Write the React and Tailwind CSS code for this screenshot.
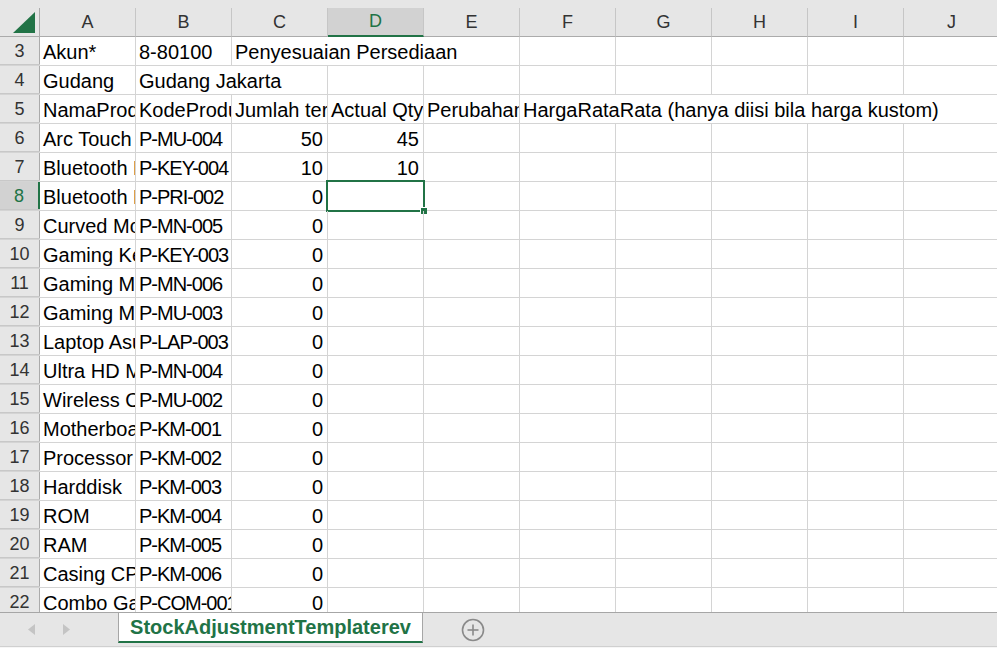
import React from "react";

const COLS = ["A", "B", "C", "D", "E", "F", "G", "H", "I", "J"];

const products = [
  [6, "Arc Touch Mouse", "P-MU-004", "50", "45"],
  [7, "Bluetooth Keyboard", "P-KEY-004", "10", "10"],
  [8, "Bluetooth Printer", "P-PRI-002", "0", ""],
  [9, "Curved Monitor", "P-MN-005", "0", ""],
  [10, "Gaming Keyboard", "P-KEY-003", "0", ""],
  [11, "Gaming Monitor", "P-MN-006", "0", ""],
  [12, "Gaming Mouse", "P-MU-003", "0", ""],
  [13, "Laptop Asus", "P-LAP-003", "0", ""],
  [14, "Ultra HD Monitor", "P-MN-004", "0", ""],
  [15, "Wireless Optical Mouse", "P-MU-002", "0", ""],
  [16, "Motherboard", "P-KM-001", "0", ""],
  [17, "Processor", "P-KM-002", "0", ""],
  [18, "Harddisk", "P-KM-003", "0", ""],
  [19, "ROM", "P-KM-004", "0", ""],
  [20, "RAM", "P-KM-005", "0", ""],
  [21, "Casing CPU", "P-KM-006", "0", ""],
  [22, "Combo Gaming", "P-COM-001", "0", ""],
];

function Cell({ w = "w-[96px]", right = false, selected = false, tight = false, children }) {
  return (
    <div
      className={`relative ${w} shrink-0 h-full border-r border-[#d4d4d4] flex items-center pt-[2px] pl-[3px] pr-[4px] text-[20px] leading-[23px] text-black whitespace-nowrap ${
        right ? "justify-end" : "justify-start"
      } ${selected ? "overflow-visible" : "overflow-hidden"} ${tight ? "tracking-[-1px]" : ""}`}
    >
      {children}
      {selected && (
        <>
          <div className="absolute left-[-2px] top-[-2px] right-[-2px] bottom-[-2px] border-2 border-[#217346] pointer-events-none" />
          <div className="absolute right-[-4px] bottom-[-4px] w-[7px] h-[7px] bg-[#217346] border-l border-t border-white" />
        </>
      )}
    </div>
  );
}

function RowHead({ n, selected = false }) {
  return (
    <div
      className={`w-[40px] shrink-0 h-full flex items-center justify-center pt-[2px] text-[18px] ${
        selected
          ? "bg-[#d2d2d2] text-[#217346] border-r-2 border-[#217346]"
          : "bg-[#e6e6e6] text-[#333333] border-r border-[#ababab]"
      }`}
    >
      {n}
    </div>
  );
}

function Row({ n, selected = false, children }) {
  return (
    <div className="flex h-[29px] shrink-0 border-b border-[#d4d4d4]">
      <div className="flex w-[40px] shrink-0 h-full border-b border-[#c8c8c8] -mb-px">
        <RowHead n={n} selected={selected} />
      </div>
      {children}
    </div>
  );
}

function Empties({ count }) {
  return Array.from({ length: count }).map((_, i) => <Cell key={i} />);
}

export default function App() {
  return (
    <div
      className="w-[997px] h-[648px] overflow-hidden flex flex-col bg-white"
      style={{ fontFamily: '"Liberation Sans", Arial, sans-serif' }}
    >
      {/* column headers */}
      <div className="bg-[#e6e6e6] pt-[8px] shrink-0">
        <div className="flex h-[29px]">
          <div className="w-[40px] shrink-0 h-full border-r border-b border-[#ababab] flex items-end justify-end pr-[4px] pb-[3px]">
            <svg width="22" height="21" viewBox="0 0 22 21">
              <polygon points="0,21 22,21 22,0" fill="#217346" />
            </svg>
          </div>
          {COLS.map((c) =>
            c === "D" ? (
              <div
                key={c}
                className="w-[96px] shrink-0 h-full bg-[#d2d2d2] border-r border-[#c6c6c6] border-b-2 border-b-[#217346] flex items-center justify-center text-[18px] text-[#217346]"
              >
                {c}
              </div>
            ) : (
              <div
                key={c}
                className="w-[96px] shrink-0 h-full border-r border-[#c6c6c6] border-b border-b-[#ababab] flex items-center justify-center text-[18px] text-[#333333]"
              >
                {c}
              </div>
            )
          )}
        </div>
      </div>

      {/* grid */}
      <div className="flex-1 overflow-hidden flex flex-col">
        <Row n={3}>
          <Cell>Akun*</Cell>
          <Cell>8-80100</Cell>
          <Cell w="w-[288px]">Penyesuaian Persediaan</Cell>
          <Empties count={5} />
        </Row>
        <Row n={4}>
          <Cell>Gudang</Cell>
          <Cell w="w-[192px]">Gudang Jakarta</Cell>
          <Empties count={7} />
        </Row>
        <Row n={5}>
          <Cell>NamaProduk</Cell>
          <Cell>KodeProduk</Cell>
          <Cell>Jumlah tercatat</Cell>
          <Cell>Actual Qty</Cell>
          <Cell>Perubahan</Cell>
          <Cell w="w-[480px]">HargaRataRata (hanya diisi bila harga kustom)</Cell>
        </Row>
        {products.map(([n, name, code, qty, actual]) => (
          <Row key={n} n={n} selected={n === 8}>
            <Cell>{name}</Cell>
            <Cell tight>{code}</Cell>
            <Cell right>{qty}</Cell>
            <Cell right selected={n === 8}>
              {actual}
            </Cell>
            <Empties count={6} />
          </Row>
        ))}
      </div>

      {/* sheet tabs */}
      <div className="h-[34px] shrink-0 bg-[#e6e6e6] border-t border-[#a6a6a6] flex items-start relative">
        <div className="w-[118px] h-full flex items-center shrink-0">
          <svg width="8" height="11" viewBox="0 0 8 11" className="ml-[28px]">
            <polygon points="7,0 7,11 0,5.5" fill="#c4c4c4" />
          </svg>
          <svg width="8" height="11" viewBox="0 0 8 11" className="ml-[26px]">
            <polygon points="1,0 1,11 8,5.5" fill="#c4c4c4" />
          </svg>
        </div>
        <div className="w-[305px] h-[30px] shrink-0 bg-white border-x border-[#a6a6a6] border-b-2 border-b-[#217346] flex items-center justify-center text-[20px] font-bold text-[#217346] whitespace-nowrap">
          StockAdjustmentTemplaterev
        </div>
        <div className="h-full flex items-center pl-[38px]">
          <svg width="24" height="24" viewBox="0 0 24 24">
            <circle cx="12" cy="12" r="10.5" fill="none" stroke="#8a8a8a" strokeWidth="1.6" />
            <line x1="12" y1="6.5" x2="12" y2="17.5" stroke="#8a8a8a" strokeWidth="1.6" />
            <line x1="6.5" y1="12" x2="17.5" y2="12" stroke="#8a8a8a" strokeWidth="1.6" />
          </svg>
        </div>
      </div>
      <div className="h-[2px] shrink-0 border-t border-[#d0d0d0] bg-[#f6f6f6]" />
    </div>
  );
}
